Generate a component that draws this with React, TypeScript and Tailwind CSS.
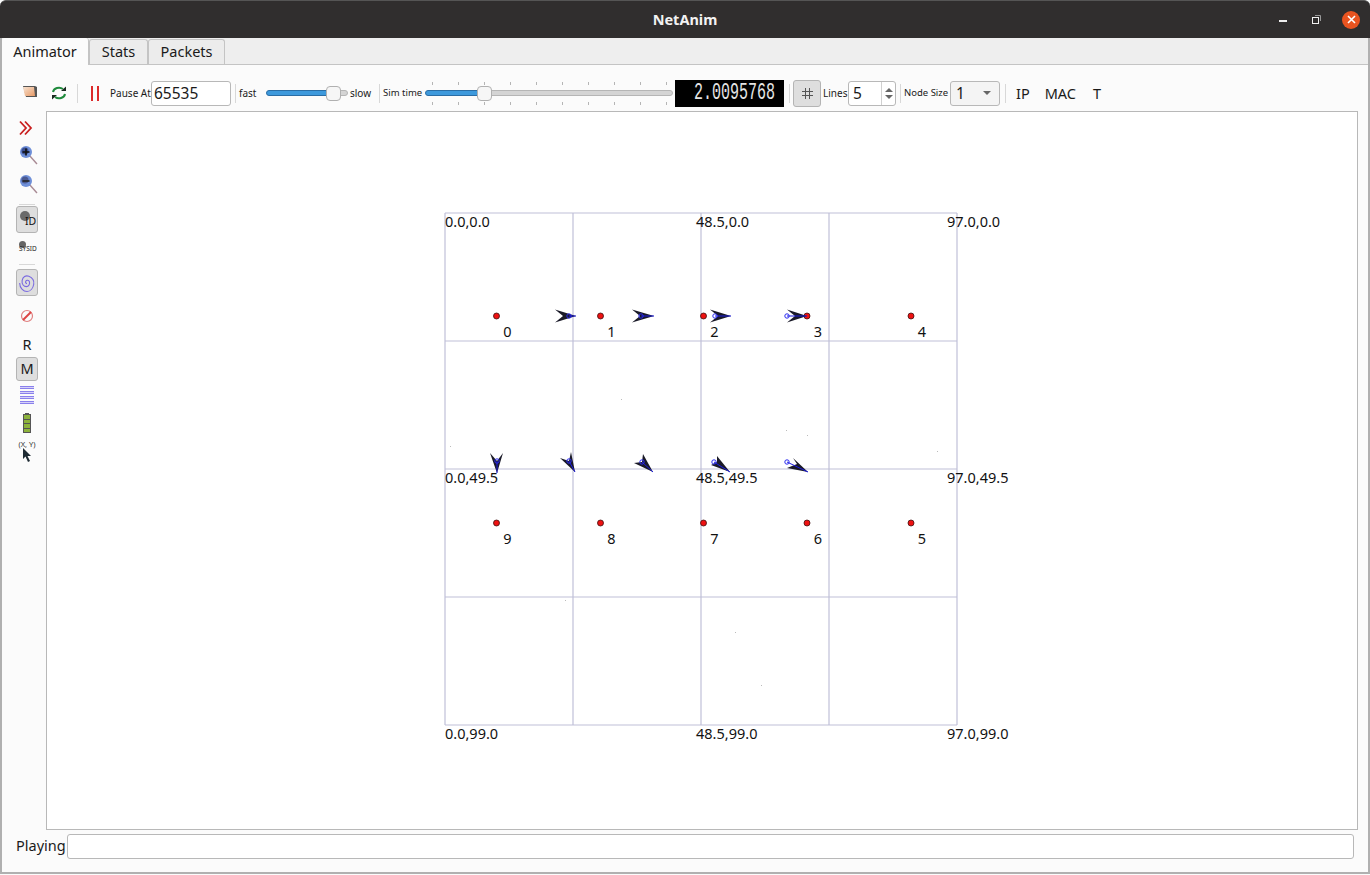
const font = { fontFamily: '"Noto Sans", "Open Sans", sans-serif' }

const gridX = [445, 573, 701, 829, 957]
const gridY = [213, 341, 469, 597, 725]

const topNodes = [
  { x: 496.5, label: '0' },
  { x: 600.5, label: '1' },
  { x: 703.5, label: '2' },
  { x: 807, label: '3' },
  { x: 911, label: '4' },
]
const bottomNodes = [
  { x: 496.5, label: '9' },
  { x: 600.5, label: '8' },
  { x: 703.5, label: '7' },
  { x: 807, label: '6' },
  { x: 911, label: '5' },
]

const coords = [
  { x: 445, y: 222, t: '0.0,0.0' },
  { x: 696, y: 222, t: '48.5,0.0' },
  { x: 947, y: 222, t: '97.0,0.0' },
  { x: 445, y: 478, t: '0.0,49.5' },
  { x: 696, y: 478, t: '48.5,49.5' },
  { x: 947, y: 478, t: '97.0,49.5' },
  { x: 445, y: 734, t: '0.0,99.0' },
  { x: 696, y: 734, t: '48.5,99.0' },
  { x: 947, y: 734, t: '97.0,99.0' },
]

// tip, wing, notch, wing, then the blue marker and where its line ends
const arrows = [
  { pts: '576,316 555,309.5 563,316 555,322.5', c: [569, 316], l: [576, 316] },
  { pts: '654,316 632,309.5 640,316 632,322.5', c: [641, 316], l: [654, 316] },
  { pts: '731,316 710,309.5 718,316 710,322.5', c: [715, 316], l: [731, 316] },
  { pts: '807,316 787,309.5 795,316 787,322.5', c: [787, 316], l: [807, 316] },
  { pts: '497,473 490,453 497,461 503,453', c: [497, 461], l: [497, 473] },
  { pts: '575,472 560,458 569,461 571,452', c: [569, 461], l: [575, 472] },
  { pts: '653,472 634,463 642,462 643,454', c: [642, 462], l: [653, 472] },
  { pts: '730,472 711,465 717,462 717,456', c: [714, 462], l: [730, 472] },
  { pts: '808,472 787,468 797,464 793,458', c: [787, 462], l: [808, 472] },
]

const specks = [
  [621, 399], [450, 446], [786, 430], [807, 435], [937, 451], [735, 632], [761, 685], [565, 600],
]

function Sep() {
  return <div className="h-[19px] w-px bg-[#d8d8d8]" />
}

function HSep() {
  return <div className="h-px w-[16px] bg-[#d8d8d8]" />
}

function Ticks() {
  return (
    <div className="flex justify-between pl-[7px] pr-[6px]">
      {Array.from({ length: 10 }).map((_, i) => (
        <div key={i} className="h-[3px] w-px bg-[#b5b5b5]" />
      ))}
    </div>
  )
}

function Handle() {
  return <div className="h-[15px] w-[15px] rounded-[4px] border border-[#b0b0b0] bg-[#f6f6f6]" />
}

function MainToolbar() {
  return (
    <div className="flex h-[46px] items-center bg-[#fbfbfb] pl-[20px] pt-[10px] text-[#1a1a1a]">
      <svg width="16" height="13" viewBox="0 0 16 13" className="mt-[-3px]">
        <path d="M1 1h12l2 1v10H4z" fill="#555" />
        <path d="M1 2h11l1 9H3z" fill="url(#folderFill)" />
        <defs>
          <linearGradient id="folderFill" x1="0" x2="1" y1="0" y2="1">
            <stop offset="0" stopColor="#f7e3d2" />
            <stop offset="1" stopColor="#e89a66" />
          </linearGradient>
        </defs>
      </svg>
      <svg width="16" height="16" viewBox="0 0 16 16" fill="none" className="ml-[13px]">
        <path d="M2 7a6 5 0 0 1 10-3" stroke="#1f8a3c" strokeWidth="2" />
        <path d="M14 9a6 5 0 0 1-10 3" stroke="#1f8a3c" strokeWidth="2" />
        <path d="M10 6h5V1.500z" fill="#1a2a20" />
        <path d="M6 10H1v4.500z" fill="#1a2a20" />
      </svg>
      <div className="ml-[10px]"><Sep /></div>
      <div className="ml-[13px] flex h-[15px] w-[8px] justify-between">
        <div className="w-[2px] bg-[#dc2a2a]" />
        <div className="w-[2px] bg-[#dc2a2a]" />
      </div>
      <span className="ml-[11px] mt-[1px] w-[41px] text-[10px] whitespace-nowrap">Pause At</span>
      <div className="flex h-[25px] w-[80px] items-center rounded-[3px] border border-[#b8b8b8] bg-white pl-[2px] pt-[2px] text-[15.5px]">65535</div>
      <div className="ml-[4px]"><Sep /></div>
      <span className="ml-[3px] mt-[1px] w-[27px] text-[10px]">fast</span>
      <div className="relative flex h-[15px] w-[82px] items-center">
        <div className="h-[6px] w-[66px] rounded-l-[3px] border border-[#2a6da5] bg-[#3d99dc]" />
        <div className="h-[6px] flex-1 rounded-r-[3px] border border-[#b5b5b5] bg-[#d4d4d4]" />
        <div className="absolute left-[60px] top-0"><Handle /></div>
      </div>
      <span className="ml-[2px] mt-[1px] w-[29px] text-[10px]">slow</span>
      <Sep />
      <span className="ml-[3px] mt-[1px] w-[42px] text-[9.5px] whitespace-nowrap">Sim time</span>
      <div className="relative flex h-[23px] w-[248px] flex-col justify-between">
        <Ticks />
        <div className="absolute left-0 top-[4px] flex h-[15px] w-full items-center">
          <div className="h-[6px] w-[53px] rounded-l-[3px] border border-[#2a6da5] bg-[#3d99dc]" />
          <div className="h-[6px] flex-1 rounded-r-[3px] border border-[#b5b5b5] bg-[#d4d4d4]" />
          <div className="absolute left-[52px] top-0"><Handle /></div>
        </div>
        <Ticks />
      </div>
      <div
        className="ml-[2px] flex h-[27px] w-[109px] items-center justify-end bg-black pr-[9px] text-[15px] leading-[15px] text-[#e4e4e4]"
        style={{ fontFamily: '"Liberation Mono", monospace' }}
      >
        <span className="inline-block scale-y-[1.6]">2.0095768</span>
      </div>
      <div className="ml-[5px]"><Sep /></div>
      <div className="ml-[3px] flex h-[27px] w-[28px] items-center justify-center rounded-[3px] border border-[#b4b4b4] bg-[#dedede]">
        <svg width="11" height="11" viewBox="0 0 11 11" stroke="#555" strokeWidth="1">
          <path d="M3.500 0v11M7.500 0v11M0 3.500h11M0 7.500h11" />
        </svg>
      </div>
      <span className="ml-[2px] mt-[1px] w-[25px] text-[10px]">Lines</span>
      <div className="flex h-[25px] w-[48px] items-center rounded-[3px] border border-[#b8b8b8] bg-white pl-[4px] text-[15.5px]">
        <span className="mt-[2px] w-[29px]">5</span>
        <div className="flex h-full w-[14px] flex-col items-center justify-center gap-[3px] border-l border-[#d0d0d0]">
          <div className="h-0 w-0 border-x-[4px] border-b-[4px] border-x-transparent border-b-[#666]" />
          <div className="h-0 w-0 border-x-[4px] border-t-[4px] border-x-transparent border-t-[#666]" />
        </div>
      </div>
      <div className="ml-[4px]"><Sep /></div>
      <span className="ml-[3px] mt-[1px] w-[46px] text-[9.5px] whitespace-nowrap">Node Size</span>
      <div className="flex h-[25px] w-[50px] items-center justify-between rounded-[3px] border border-[#b8b8b8] bg-[#f4f4f4] pl-[5px] pr-[8px] text-[15.5px]">
        <span className="mt-[2px]">1</span>
        <div className="h-0 w-0 border-x-[4px] border-t-[4px] border-x-transparent border-t-[#666]" />
      </div>
      <div className="ml-[5px]"><Sep /></div>
      <span className="ml-[10px] mt-[2px] text-[14.5px]">IP</span>
      <span className="ml-[15px] mt-[2px] text-[14.5px]">MAC</span>
      <span className="ml-[17px] mt-[2px] text-[14.5px]">T</span>
    </div>
  )
}

function SideToolbar() {
  return (
    <div className="relative flex w-[44px] flex-col items-center bg-[#fbfbfb] pl-[6px] pt-[9px] text-[#1a1a1a]">
      <svg width="14" height="16" viewBox="0 0 14 16" fill="none" stroke="#c92020" strokeWidth="1.8" className="mr-[2px]">
        <path d="M1 1.500l6 6.500-6 6.500M6 1.500l6 6.500-6 6.500" />
      </svg>
      <svg width="20" height="22" viewBox="0 0 20 22" className="mt-[8px] ml-[3px]">
        <path d="M10 11l8 9" stroke="#a88a94" strokeWidth="1.4" />
        <circle cx="7" cy="8" r="6" fill="#6e8fd8" />
        <circle cx="6" cy="7" r="3.500" fill="#3b4f92" />
        <path d="M3.500 8h7M7 4.500v7" stroke="#111" strokeWidth="1.6" />
      </svg>
      <svg width="20" height="22" viewBox="0 0 20 22" className="mt-[7px] ml-[3px]">
        <path d="M10 11l8 9" stroke="#a88a94" strokeWidth="1.4" />
        <circle cx="7" cy="8" r="6" fill="#6e8fd8" />
        <circle cx="6" cy="7" r="3.500" fill="#4b5a92" />
        <path d="M3.500 8h7" stroke="#222" strokeWidth="1.6" />
      </svg>
      <div className="mt-[9px]"><HSep /></div>
      <div className="relative mt-[1px] h-[27px] w-[22px] rounded-[3px] border border-[#b4b4b4] bg-[#dedede]">
        <div className="absolute left-[3px] top-[4px] h-[10px] w-[10px] rounded-full bg-[#6a6a6a]" />
        <span className="absolute left-[8px] top-[8px] text-[10.5px] leading-[12px] text-[#111]">ID</span>
      </div>
      <div className="relative mt-[8px] h-[14px] w-[26px]">
        <div className="absolute left-[5px] top-[0px] h-[7px] w-[7px] rounded-full bg-[#666]" />
        <span className="absolute left-[5px] top-[3px] text-[6.5px] leading-[9px] text-[#222]">SYSID</span>
      </div>
      <div className="mt-[9px]"><HSep /></div>
      <div className="mt-[4px] flex h-[27px] w-[22px] items-center justify-center rounded-[3px] border border-[#b4b4b4] bg-[#dedede]">
        <svg width="20" height="22" viewBox="0 0 16 18" fill="none" stroke="#7a6ae0" strokeWidth="0.9">
          <path d="M8 9.500c-1 0-1.500-1-1-2s2.500-1 3 .5-.5 4-2.500 4-4-2-3.500-5 3-4.500 5.500-3.500 4.500 3.500 4 6.500-2.500 6-5.500 6-6-3-6-7" />
        </svg>
      </div>
      <svg width="14" height="14" viewBox="0 0 14 14" fill="none" stroke="#e08080" strokeWidth="1.2" className="mt-[13px]">
        <circle cx="7" cy="7" r="5.500" />
        <path d="M3 11l8-8" stroke="#d44" strokeWidth="2" />
      </svg>
      <span className="mt-[11px] text-[14.5px] leading-[20px]">R</span>
      <div className="mt-[3px] flex h-[24px] w-[22px] items-center justify-center rounded-[3px] border border-[#b4b4b4] bg-[#dedede] text-[14.5px]">M</div>
      <div className="mt-[5px] flex h-[18px] w-[14px] flex-col justify-between">
        {[0, 1, 2, 3].map(i => (
          <div key={i} className="h-[3px] border-y border-[#8a80ec] bg-[#d6d2f8]" />
        ))}
      </div>
      <div className="mt-[9px] h-[1px] w-[4px] bg-[#555]" />
      <div className="flex h-[19px] w-[8px] flex-col gap-px border border-[#555] bg-[#555]">
        {[0, 1, 2, 3].map(i => (
          <div key={i} className="flex-1 bg-[#8db33c]" />
        ))}
      </div>
      <span className="mt-[7px] text-[7.5px] leading-[9px] text-[#333]">(X, Y)</span>
      <svg width="10" height="16" viewBox="0 0 10 16" className="mt-[-2px]">
        <path d="M1 1v11l2.500-2.500L6 15l2-1-2.500-5H9z" fill="#1e2b33" />
      </svg>
      <div className="absolute right-[-1px] top-[354px] h-[16px] border-r border-dotted border-[#999]" />
    </div>
  )
}

function Canvas() {
  return (
    <div className="relative flex-1 border border-[#b8b8b8] bg-white">
      {/* scene coordinates are the page's own, hence the offset */}
      <svg width="1370" height="875" className="absolute left-[-47px] top-[-112px]">
        {gridX.map(x => (
          <line key={x} x1={x} x2={x} y1={213} y2={725} stroke="#c0c0d8" strokeWidth="1.2" />
        ))}
        {gridY.map(y => (
          <line key={y} x1={445} x2={957} y1={y} y2={y} stroke="#c0c0d8" strokeWidth="1.2" />
        ))}
        {specks.map(([x, y]) => (
          <rect key={`${x}-${y}`} x={x} y={y} width="1" height="1" fill="#bbb" />
        ))}
        {[...topNodes.map(n => ({ ...n, y: 316 })), ...bottomNodes.map(n => ({ ...n, y: 523 }))].map(n => (
          <g key={n.label}>
            <circle cx={n.x} cy={n.y} r="3" fill="#ee1111" stroke="#401010" strokeWidth="0.8" />
            <text x={n.x + 11} y={n.y + 21} textAnchor="middle" fontSize="14.500" fill="#111" style={font}>{n.label}</text>
          </g>
        ))}
        {coords.map(c => (
          <text key={c.t} x={c.x} y={c.y + 5} fontSize="14.500" fill="#111" style={font}>{c.t}</text>
        ))}
        {arrows.map(a => (
          <g key={a.pts}>
            <polygon points={a.pts} fill="#1a1a28" />
            <line x1={a.c[0]} y1={a.c[1]} x2={a.l[0]} y2={a.l[1]} stroke="#1a1ae0" strokeWidth="1" />
            <circle cx={a.c[0]} cy={a.c[1]} r="2.2" fill="none" stroke="#2a2af0" strokeWidth="1" />
          </g>
        ))}
      </svg>
    </div>
  )
}

export default function App() {
  return (
    <div className="h-[875px] w-[1370px] overflow-hidden bg-[#fbfbfb]" style={font}>
      <div className="flex h-[874px] flex-col">
        <div className="relative flex h-[38px] shrink-0 items-center justify-center rounded-t-[6px] border-t border-[#555] bg-[#302e2e]">
          <span className="text-[14.5px] font-bold text-[#f2f2f2]">NetAnim</span>
          <div className="absolute right-[10px] top-0 flex h-full items-center">
            <div className="mr-[25px] mt-[3px] h-[2px] w-[8px] bg-[#eee]" />
            <svg width="9" height="9" viewBox="0 0 9 9" fill="none" className="mr-[21px]">
              <rect x="0.5" y="2.5" width="6" height="6" stroke="#f0f0f0" />
              <path d="M3 .5h5.500V6" stroke="#999" />
            </svg>
            <div className="flex h-[18px] w-[18px] items-center justify-center rounded-full bg-[#e95420]">
              <svg width="9" height="9" viewBox="0 0 9 9" stroke="#fff" strokeWidth="1.6">
                <path d="M1 1l7 7M8 1l-7 7" />
              </svg>
            </div>
          </div>
        </div>

        <div className="flex flex-1 flex-col border-x-2 border-b-2 border-[#b0b0b0]">
          <div className="flex h-[27px] shrink-0 items-end border-b border-[#c4c4c4] bg-[#eeeeee] text-[14.5px] text-[#1a1a1a]">
            <div className="mb-[-1px] flex h-[27px] w-[87px] items-center justify-center rounded-t-[3px] border-r border-[#c4c4c4] bg-[#fbfbfb]">Animator</div>
            <div className="flex h-[25px] w-[59px] items-center justify-center rounded-t-[3px] border-x border-t border-[#c4c4c4] bg-[#ececec]">Stats</div>
            <div className="flex h-[25px] w-[77px] items-center justify-center rounded-t-[3px] border-x border-t border-[#c4c4c4] bg-[#ececec]">Packets</div>
          </div>

          <MainToolbar />

          <div className="flex h-[719px] shrink-0">
            <SideToolbar />
            <div className="flex flex-1 pr-[10px]">
              <Canvas />
            </div>
          </div>

          <div className="flex flex-1 items-center pb-[10px] pl-[14px] pr-[14px] text-[14.5px] text-[#1a1a1a]">
            <span className="w-[51px]">Playing</span>
            <div className="h-[25px] flex-1 rounded-[3px] border border-[#b8b8b8] bg-white" />
          </div>
        </div>
      </div>
    </div>
  )
}
